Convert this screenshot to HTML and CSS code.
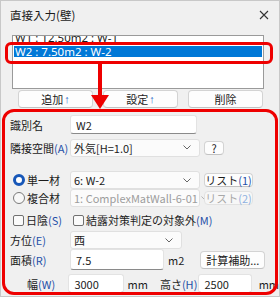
FILE: index.html
```html
<!DOCTYPE html>
<html lang="ja">
<head>
<meta charset="utf-8">
<link rel="stylesheet" href="styles.css">
</head>
<body>
<div class="win">
  <div class="titlebar">
    <span class="title">直接入力(壁)</span>
    <svg class="close" width="10" height="10" viewBox="0 0 10 10"><path d="M1 1L9 9M9 1L1 9" stroke="#333" stroke-width="1.1"/></svg>
  </div>
  <div class="listbox">
    <div class="list-inner">
      <div class="item first">W1 : 12.50m2 : W-1</div>
      <div class="item sel">W2 : 7.50m2 : W-2</div>
    </div>
  </div>
  <div class="btnrow">
    <div class="btn big">追加<span class="up">↑</span></div>
    <div class="btn big">設定<span class="up">↑</span></div>
    <div class="btn big">削除</div>
  </div>
  <div class="form">
    <div class="row r1">
      <span class="lbl">識別名</span>
      <div class="tb w-name">W2</div>
    </div>
    <div class="row r2">
      <span class="lbl">隣接空間<span class="m">(A)</span></span>
      <div class="cb w-adj"><span>外気[H=1.0]</span><svg class="chev" width="8" height="5" viewBox="0 0 8 5"><path d="M0.5 0.5L4 4L7.5 0.5" fill="none" stroke="#666"/></svg></div>
      <div class="btn small q">?</div>
    </div>
    <div class="row r3">
      <span class="lbl"><span class="radio on"></span>単一材</span>
      <div class="cb w-adj"><span>6: W-2</span><svg class="chev" width="8" height="5" viewBox="0 0 8 5"><path d="M0.5 0.5L4 4L7.5 0.5" fill="none" stroke="#666"/></svg></div>
      <div class="btn small list">リスト<span class="m">(1)</span></div>
    </div>
    <div class="row r4">
      <span class="lbl"><span class="radio"></span>複合材</span>
      <div class="cb w-adj dis"><span>1: ComplexMatWall-6-01</span><svg class="chev" width="8" height="5" viewBox="0 0 8 5"><path d="M0.5 0.5L4 4L7.5 0.5" fill="none" stroke="#b5b5b5"/></svg></div>
      <div class="btn small list dis">リスト<span class="m">(2)</span></div>
    </div>
    <div class="row r5">
      <span class="chk"></span><span class="clbl">日陰<span class="m">(S)</span></span>
      <span class="chk chk2"></span><span class="clbl">結露対策判定の対象外<span class="m">(M)</span></span>
    </div>
    <div class="row r6">
      <span class="lbl">方位<span class="m">(E)</span></span>
      <div class="cb w-dir"><span>西</span><svg class="chev" width="8" height="5" viewBox="0 0 8 5"><path d="M0.5 0.5L4 4L7.5 0.5" fill="none" stroke="#666"/></svg></div>
    </div>
    <div class="row r7">
      <span class="lbl">面積<span class="m">(R)</span></span>
      <div class="tb w-area">7.5</div>
      <span class="unit u-m2">m2</span>
      <div class="btn calc">計算補助...</div>
    </div>
    <div class="row r8">
      <span class="lbl lbl-w">幅<span class="m">(W)</span></span>
      <div class="tb w-w">3000</div>
      <span class="unit u-mm1">mm</span>
      <span class="lbl-h">高さ<span class="m">(H)</span></span>
      <div class="tb w-h">2500</div>
      <span class="unit u-mm2">mm</span>
    </div>
  </div>
  <div class="hl hl-sel"></div>
  <div class="hl hl-form"></div>
  <svg class="arrow" width="18" height="47" viewBox="0 0 18 47"><rect x="7" y="0" width="4" height="33" fill="#ee0000"/><path d="M0 32H18L9 46Z" fill="#ee0000"/></svg>
</div>
</body>
</html>
```

FILE: styles.css
```css
* { box-sizing: border-box; }
html, body { margin: 0; padding: 0; }
body {
  width: 280px;
  height: 297px;
  overflow: hidden;
  font-family: "Noto Sans CJK JP", "Noto Sans", sans-serif;
  font-size: 11px;
  color: #1b1b1b;
  background: #f0f0f0;
}
.win {
  position: relative;
  width: 280px;
  height: 297px;
  background: #f0f0f0;
  border: 1px solid #c8c8c8;
  overflow: hidden;
}
.titlebar {
  height: 34px;
  display: flex;
  align-items: flex-start;
  justify-content: space-between;
  padding: 6px 10px 0 9px;
}
.title { font-size: 11.5px; line-height: 16px; }
.close { margin-top: 3px; margin-right: 0; }
.listbox {
  margin-left: 11px;
  width: 252px;
  height: 54px;
  background: #fff;
  border: 1px solid #9a9a9a;
  overflow: hidden;
}
.list-inner { margin-top: -4px; }
.item {
  height: 11px;
  line-height: 11px;
  font-family: "Noto Sans", "Noto Sans CJK JP", sans-serif;
  font-size: 11.5px;
  padding-left: 1px;
  margin: 0 1px;
  white-space: nowrap;
}
.item.first { height: 14px; }
.item.sel { background: #0078d7; color: #fff; }
.btnrow {
  display: flex;
  gap: 10px;
  margin: 1px 0 0 17px;
}
.btn {
  display: flex;
  align-items: center;
  justify-content: center;
  background: #fdfdfd;
  border: 1px solid #d3d3d3;
  border-bottom-color: #c2c2c2;
  border-radius: 4px;
  white-space: nowrap;
}
.btn.big { width: 75px; height: 18px; }
.up { font-family: "Liberation Sans", sans-serif; color: #2a64c8; font-size: 11px; margin-left: 1px; }
.form { padding: 7px 0 0 9px; }
.row { display: flex; align-items: center; }
.lbl { width: 60px; display: flex; align-items: center; white-space: nowrap; }
.m { color: #1f4fa8; }
.tb {
  height: 19px;
  background: #fff;
  border: 1px solid #e3e3e3;
  border-bottom: 1px solid #8a8a8a;
  border-radius: 3px;
  padding-left: 5px;
  display: flex;
  align-items: center;
}
.cb {
  height: 18px;
  background: #fbfbfb;
  border: 1px solid #e0e0e0;
  border-radius: 3px;
  padding: 0 8px 0 3px;
  display: flex;
  align-items: center;
  justify-content: space-between;
  white-space: nowrap;
}
.chev { flex: none; margin-left: 3px; }
.cb.dis { color: #9d9d9d; }
.r1 { height: 19px; }
.w-name { width: 127px; }
.r2 { height: 19px; margin-top: 4px; }
.w-adj { width: 130px; }
.btn.small { height: 14px; margin-left: 4px; }
.q { width: 20px; }
.list { width: 49px; }
.btn.dis { color: #a8a8a8; background: #f7f7f7; border-color: #e2e2e2; }
.btn.dis .m { color: #8fb0e0; }
.r3 { height: 18px; margin-top: 14px; }
.r4 { height: 18px; }
.radio {
  width: 12px; height: 12px;
  border-radius: 50%;
  border: 1px solid #7a7a7a;
  background: #f8f8f8;
  margin: 0 2px 0 3px;
}
.radio.on {
  border: 3px solid #1757b8;
  background: #fff;
}
.r5 { height: 16px; margin-top: 5px; }
.chk {
  width: 11px; height: 11px;
  border: 1px solid #707070;
  border-radius: 2px;
  background: #fafafa;
  margin: 0 2px 0 3px;
}
.chk2 { margin-left: 11px; }
.clbl { white-space: nowrap; }
.r6 { height: 18px; margin-top: 3px; }
.w-dir { width: 112px; }
.r7 { height: 21px; margin-top: 0px; }
.w-area { width: 94px; height: 21px; }
.unit { white-space: nowrap; }
.u-m2 { margin-left: 4px; }
.calc { width: 65px; height: 18px; margin-left: 16px; }
.r8 { height: 19px; margin-top: 4px; }
.lbl-w { padding-left: 17px; }
.w-w { width: 57px; }
.u-mm1 { margin-left: 4px; }
.lbl-h { margin-left: 12px; width: 40px; white-space: nowrap; }
.w-h { width: 55px; }
.u-mm2 { margin-left: 7px; }
.hl {
  position: absolute;
  border: 3px solid #ee0000;
  pointer-events: none;
}
.hl-sel { left: 4px; top: 41px; width: 268px; height: 22px; border-radius: 6px; }
.hl-form { left: 1px; top: 108px; width: 276px; height: 186px; border-radius: 12px; }
.arrow { position: absolute; left: 90px; top: 62px; }
```
